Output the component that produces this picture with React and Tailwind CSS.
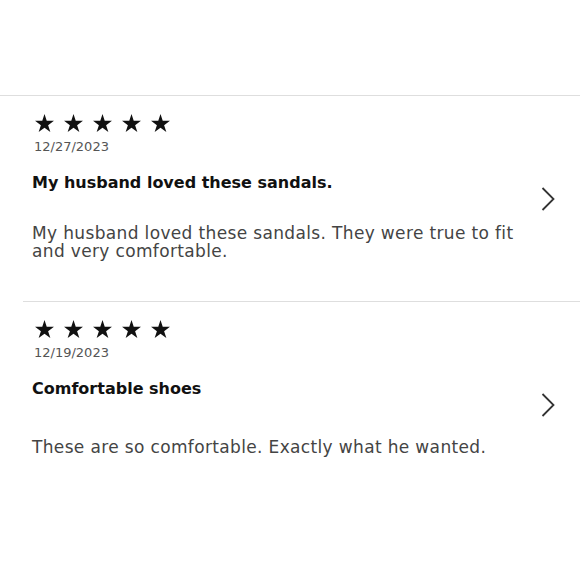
import React from "react";

const Star = () => (
  <svg width="19" height="18" viewBox="0.59 0 22.82 21.71" className="block">
    <path
      d="M12 0 L14.69 8.29 L23.41 8.29 L16.36 13.42 L19.05 21.71 L12 16.58 L4.95 21.71 L7.64 13.42 L0.59 8.29 L9.31 8.29 Z"
      fill="#111"
    />
  </svg>
);

const Chevron = () => (
  <svg width="14" height="24" viewBox="0 0 14 24" className="block">
    <path d="M1.5 1 L12.5 12 L1.5 23" fill="none" stroke="#333" strokeWidth="1.8" />
  </svg>
);

const Review = ({ date, title, body, bodyMt }) => (
  <div className="flex h-[205px] items-center pl-[32px] pr-[25px]">
    <div className="flex-1 self-start pt-[18px]">
      <div className="ml-[3px] flex gap-[10px]">
        <Star />
        <Star />
        <Star />
        <Star />
        <Star />
      </div>
      <div className="ml-[2px] mt-[6px] text-[13px] leading-[17px] text-[#555]">{date}</div>
      <div className="mt-[17px] text-[16px] leading-[21px] font-bold text-[#111]">{title}</div>
      <div className={`${bodyMt} text-[17px] leading-[18px] tracking-[0.35px] text-[#444] pr-[10px]`}>{body}</div>
    </div>
    <Chevron />
  </div>
);

export default function App() {
  return (
    <div className="w-[580px] h-[580px] bg-white overflow-hidden" style={{ fontFamily: '"DejaVu Sans", Verdana, sans-serif' }}>
      <div className="h-[95px]" />
      <div className="h-px bg-[#dedede]" />
      <Review
        date="12/27/2023"
        title="My husband loved these sandals."
        body="My husband loved these sandals. They were true to fit and very comfortable."
        bodyMt="mt-[31px]"
      />
      <div className="ml-[23px] h-px bg-[#dedede]" />
      <Review
        date="12/19/2023"
        title="Comfortable shoes"
        body="These are so comfortable. Exactly what he wanted."
        bodyMt="mt-[39px]"
      />
    </div>
  );
}
